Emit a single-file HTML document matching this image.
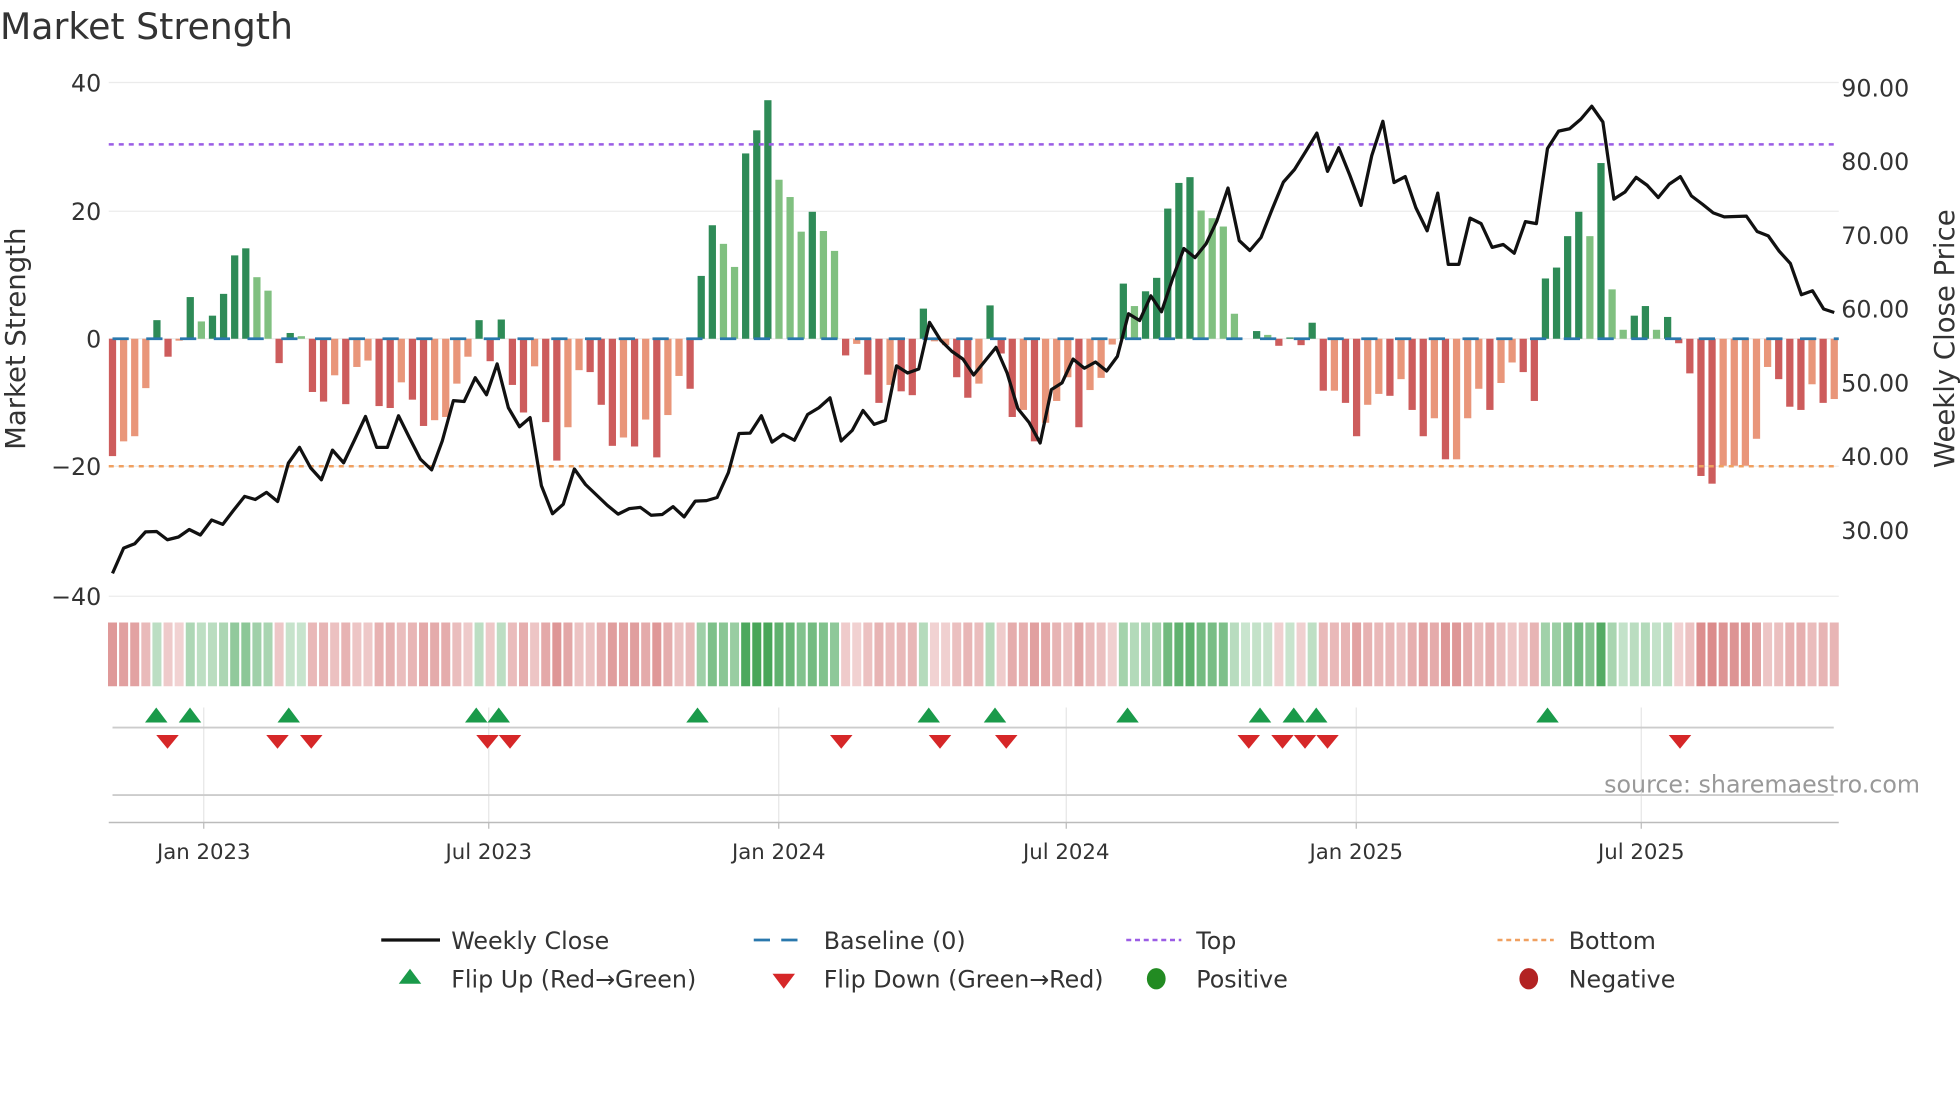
<!DOCTYPE html>
<html><head><meta charset="utf-8"><style>
html,body{margin:0;padding:0;background:#fff;width:1960px;height:1102px;overflow:hidden}
svg{display:block}
text{font-family:"DejaVu Sans","Liberation Sans",sans-serif;fill:#333}
</style></head><body>
<svg id="s" width="1960" height="1102" viewBox="0 0 1568 881.6" xmlns="http://www.w3.org/2000/svg">
<text x="0" y="31" font-size="29">Market Strength</text>
<g stroke="#ebebeb" stroke-width="1">
<line x1="87" y1="66" x2="1471" y2="66"/><line x1="87" y1="169" x2="1471" y2="169"/>
<line x1="87" y1="271" x2="1471" y2="271"/><line x1="87" y1="373" x2="1471" y2="373"/>
<line x1="87" y1="477" x2="1471" y2="477"/>
</g>
<g id="bars"></g>
<g id="heat"></g>
<line x1="87" y1="115.5" x2="1471" y2="115.5" stroke="#9b5de5" stroke-width="2" stroke-dasharray="4,4"/>
<line x1="87" y1="373" x2="1471" y2="373" stroke="#f0a060" stroke-width="2" stroke-dasharray="4,4"/>
<line x1="90" y1="271" x2="1471" y2="271" stroke="#2a78ad" stroke-width="2.2" stroke-dasharray="13,14"/>
<polyline id="price" fill="none" stroke="#111" stroke-width="2.6" stroke-linejoin="round"/>
<g font-size="19" text-anchor="end">
<text x="81" y="73">40</text><text x="81" y="176">20</text><text x="81" y="278">0</text>
<text x="81" y="380">−20</text><text x="81" y="484">−40</text>
</g>
<g font-size="19">
<text x="1473" y="77">90.00</text><text x="1473" y="136">80.00</text><text x="1473" y="195">70.00</text>
<text x="1473" y="254">60.00</text><text x="1473" y="313">50.00</text><text x="1473" y="372">40.00</text>
<text x="1473" y="431">30.00</text>
</g>
<text font-size="22" text-anchor="middle" transform="translate(20,271) rotate(-90)">Market Strength</text>
<text font-size="22" text-anchor="middle" transform="translate(1563,271) rotate(-90)">Weekly Close Price</text>
<g stroke="#e6e6e6" stroke-width="1">
<line x1="163" y1="566" x2="163" y2="658"/><line x1="391" y1="566" x2="391" y2="658"/>
<line x1="623" y1="566" x2="623" y2="658"/><line x1="853" y1="566" x2="853" y2="658"/>
<line x1="1085" y1="566" x2="1085" y2="658"/><line x1="1313" y1="566" x2="1313" y2="658"/>
</g>
<line x1="90" y1="582" x2="1467" y2="582" stroke="#ccc" stroke-width="1.5"/>
<line x1="90" y1="636" x2="1467" y2="636" stroke="#ccc" stroke-width="1.5"/>
<line x1="87" y1="658" x2="1471" y2="658" stroke="#bbb" stroke-width="1.2"/>
<g stroke="#bbb"><line x1="163" y1="658" x2="163" y2="663"/><line x1="391" y1="658" x2="391" y2="663"/><line x1="623" y1="658" x2="623" y2="663"/><line x1="853" y1="658" x2="853" y2="663"/><line x1="1085" y1="658" x2="1085" y2="663"/><line x1="1313" y1="658" x2="1313" y2="663"/></g>
<g id="flips"></g>
<text x="1536" y="634" font-size="19" text-anchor="end" style="fill:#999">source: sharemaestro.com</text>
<g font-size="17" text-anchor="middle">
<text x="163" y="687">Jan 2023</text><text x="391" y="687">Jul 2023</text><text x="623" y="687">Jan 2024</text>
<text x="853" y="687">Jul 2024</text><text x="1085" y="687">Jan 2025</text><text x="1313" y="687">Jul 2025</text>
</g>
<line x1="305" y1="752" x2="352" y2="752" stroke="#111" stroke-width="2.6"/>
<line x1="603" y1="752" x2="646" y2="752" stroke="#2a78ad" stroke-width="2.2" stroke-dasharray="13,9"/>
<line x1="901" y1="752" x2="945" y2="752" stroke="#9b5de5" stroke-width="2" stroke-dasharray="4,3"/>
<line x1="1198" y1="752" x2="1243" y2="752" stroke="#f0a060" stroke-width="2" stroke-dasharray="4,3"/>
<polygon points="328,775 319,787 337,787" fill="#1a9a4a"/>
<polygon points="618,779 636,779 627,791" fill="#d62728"/>
<ellipse cx="925" cy="783" rx="7.5" ry="8.5" fill="#228b22"/>
<ellipse cx="1223" cy="783" rx="7.5" ry="8.5" fill="#b22222"/>
<g font-size="19">
<text x="361" y="759">Weekly Close</text><text x="659" y="759">Baseline (0)</text>
<text x="957" y="759">Top</text><text x="1255" y="759">Bottom</text>
<text x="361" y="790">Flip Up (Red→Green)</text><text x="659" y="790">Flip Down (Green→Red)</text>
<text x="957" y="790">Positive</text><text x="1255" y="790">Negative</text>
</g>
</svg>
<script>
var NS="http://www.w3.org/2000/svg";
function el(t,a,p){var e=document.createElementNS(NS,t);for(var k in a)e.setAttribute(k,a[k]);p.appendChild(e);return e;}
var B=[[-18.3,1],[-16,0],[-15.2,0],[-7.7,0],[2.9,1],[-2.8,1],[-0.3,0],[6.5,1],[2.7,0],[3.6,1],[7,1],[13,1],[14.1,1],[9.6,0],[7.5,0],[-3.8,1],[0.9,1],[0.4,0],[-8.3,1],[-9.8,1],[-5.7,0],[-10.2,1],[-4.4,0],[-3.4,0],[-10.5,1],[-10.8,1],[-6.8,0],[-9.5,1],[-13.6,1],[-12.7,0],[-12.2,0],[-7,0],[-2.8,0],[2.9,1],[-3.5,1],[3,1],[-7.2,1],[-11.5,1],[-4.3,0],[-13,1],[-19,1],[-13.8,0],[-4.9,0],[-5.2,1],[-10.3,1],[-16.7,1],[-15.4,0],[-16.8,1],[-12.6,0],[-18.5,1],[-11.9,0],[-5.8,0],[-7.8,1],[9.8,1],[17.7,1],[14.8,0],[11.2,0],[28.9,1],[32.5,1],[37.2,1],[24.8,0],[22.1,0],[16.7,0],[19.8,1],[16.8,0],[13.7,0],[-2.6,1],[-0.8,0],[-5.6,1],[-10,1],[-7.2,0],[-8.2,1],[-8.8,1],[4.7,1],[-0.4,0],[-1,0],[-6,1],[-9.2,1],[-7,0],[5.2,1],[-2.3,1],[-12.2,1],[-11.1,0],[-16,1],[-13.1,0],[-9.7,0],[-6,0],[-13.8,1],[-8,0],[-6.1,0],[-0.9,0],[8.6,1],[5.1,0],[7.4,1],[9.5,1],[20.3,1],[24.3,1],[25.2,1],[20,0],[18.8,0],[17.5,0],[3.9,0],[0,0],[1.2,1],[0.6,0],[-1.1,1],[0.2,1],[-1,1],[2.5,1],[-8.1,1],[-8.1,0],[-10,1],[-15.2,1],[-10.3,0],[-8.6,0],[-8.9,1],[-6.3,0],[-11.1,1],[-15.2,1],[-12.4,0],[-18.8,1],[-18.8,0],[-12.4,0],[-7.8,0],[-11.1,1],[-6.9,0],[-3.7,0],[-5.2,1],[-9.7,1],[9.4,1],[11.1,1],[16,1],[19.8,1],[16,0],[27.4,1],[7.7,0],[1.4,0],[3.6,1],[5.1,1],[1.4,0],[3.4,1],[-0.7,1],[-5.4,1],[-21.4,1],[-22.6,1],[-19.8,0],[-19.8,0],[-19.8,0],[-15.6,0],[-4.4,0],[-6.3,1],[-10.6,1],[-11.1,1],[-7.1,0],[-10,1],[-9.4,0]];
var bars=document.getElementById('bars'),heat=document.getElementById('heat');
var N=B.length,pitch=(1467.4-90)/(N-1),Z=271,U=5.13;
for(var i=0;i<N;i++){var v=B[i][0],d=B[i][1],x=90+i*pitch;
 var h=Math.abs(v)*U,y=v>=0?Z-h:Z;
 var c=v>=0?(d?'#2e8b57':'#80c080'):(d?'#cd5c5c':'#e9967a');
 if(h>0.3)el('rect',{x:x-2.9,y:y,width:5.8,height:h,fill:c},bars);
 var a=Math.min(1,Math.abs(v)/30);
 var col=v>=0?'rgba(40,150,60,'+(0.25+0.6*a)+')':'rgba(200,80,80,'+(0.25+0.55*a)+')';
 el('rect',{x:x-3.6,y:498,width:7.2,height:51,fill:col},heat);
}
var P=[];
function add(arr,fx){for(var j=0;j<arr.length;j+=2)P.push([fx(arr[j]),66+(arr[j+1]-5)*0.3162]);}
add([28,1247,53,1183,78,1172,102,1142,127,1141,151,1162,176,1155,200,1136,225,1150,250,1112,275,1123,299,1088,324,1052,348,1060,373,1042,398,1065,422,968,447,928,472,980,496,1010,521,935,546,967,570,910,595,850,620,928,644,928,669,848,693,903,718,958,743,985,767,912,792,810,816,812,841,752,866,795,890,717,915,828,940,876,964,853,989,1025,1014,1096,1038,1072,1063,983,1088,1022,1112,1048,1137,1075,1161,1097,1186,1083,1211,1080,1235,1100,1260,1098,1284,1078,1309,1104,1334,1064,1359,1063,1383,1055,1408,992,1432,893,1457,892,1482,848,1506,915,1531,895,1556,910],function(z){return 80+z*0.357;});
add([62,845,87,828,112,803,137,912,162,885,186,835,211,870,236,860,261,722,286,740,311,730,335,612,360,657,385,685,410,705,434,745,459,710,484,675,509,740,533,830,558,865,583,917,608,782,632,765,657,705,682,728,707,712,732,735,756,698,781,590,806,607,831,545,855,585,880,500,905,425,930,448,955,413,979,355,1004,272,1029,405,1053,430,1078,397,1103,325,1128,257,1153,225,1178,180,1203,133,1227,230,1252,170,1277,240,1302,316,1326,190,1351,103,1376,258,1401,243,1425,322,1450,380,1474,285],function(z){return 624+z*0.357;});
add([135,465,165,465,196,348,227,362,258,422,289,415,320,437,351,357,382,362,413,172,444,128,475,122,506,98,537,65,568,105,599,300,630,282,661,245,692,265,723,296,754,262,785,243,816,292,847,313,877,335,908,345,939,344,970,343,1000,382,1031,393,1062,432,1093,463,1124,542,1155,532,1186,578,1216,587],function(z){return 1120+z/3.5;});
document.getElementById('price').setAttribute('points',P.map(function(p){return p[0].toFixed(1)+','+p[1].toFixed(1)}).join(' '));
var fl=document.getElementById('flips');
[125,152,231,381,399,558,743,796,902,1008,1035,1053,1238].forEach(function(x){el('polygon',{points:(x)+',566 '+(x-9)+',578 '+(x+9)+',578',fill:'#1a9a4a'},fl);});
[134,222,249,390,408,673,752,805,999,1026,1044,1062,1344].forEach(function(x){el('polygon',{points:(x-9)+',588 '+(x+9)+',588 '+x+',599',fill:'#d62728'},fl);});
</script>
</body></html>
